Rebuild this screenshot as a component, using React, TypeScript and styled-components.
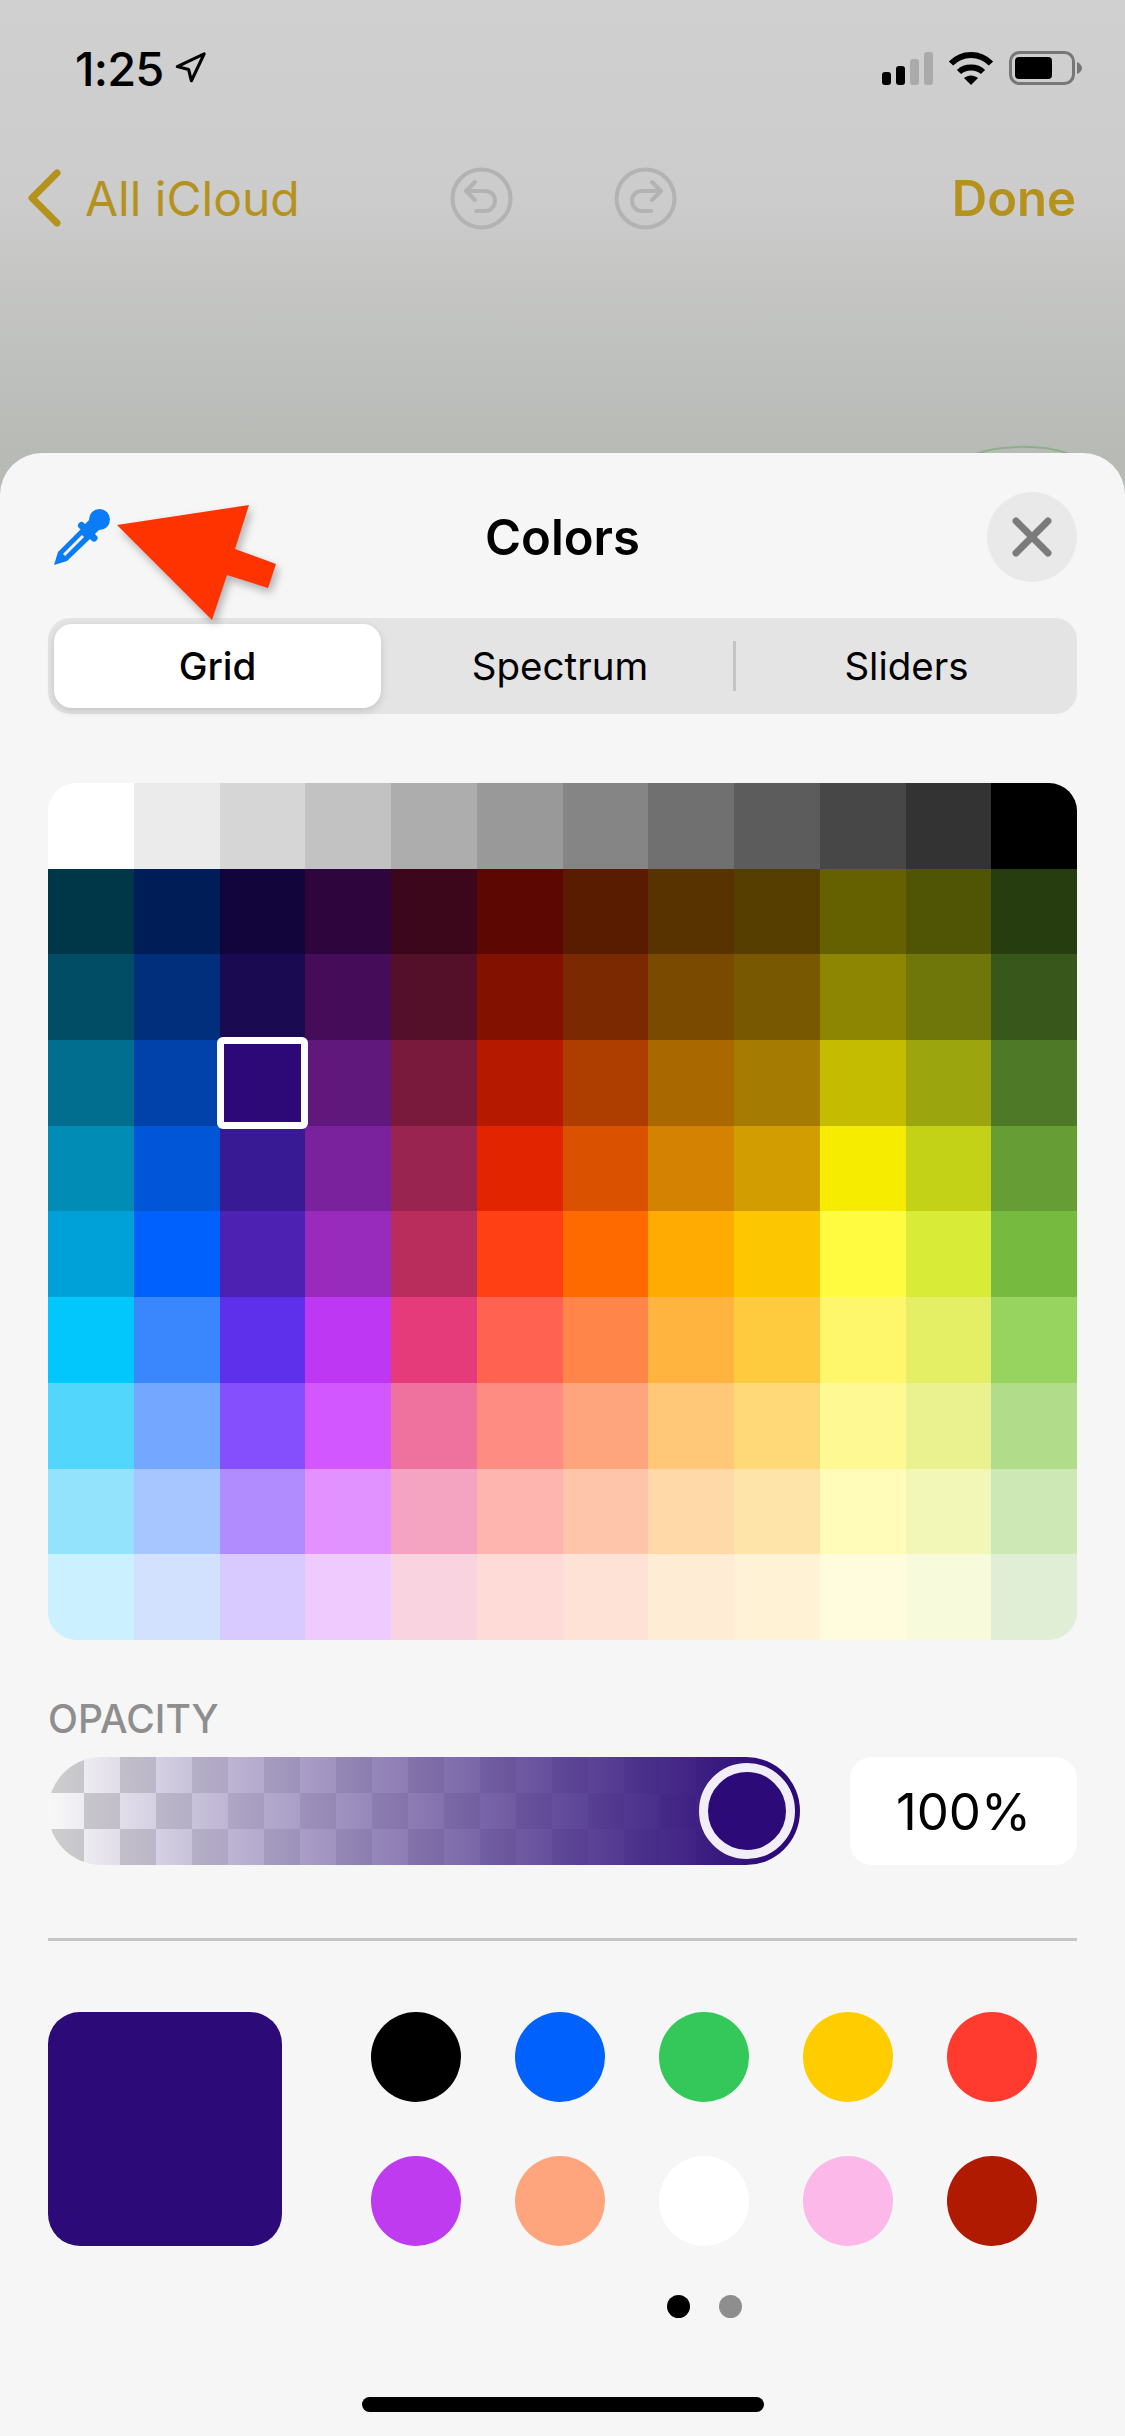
import styled, { createGlobalStyle } from 'styled-components';
import { Navigation, X } from 'lucide-react';

const GRID_COLORS = [
  ['#ffffff', '#ebebeb', '#d6d6d6', '#c2c2c2', '#adadad', '#999999', '#858585', '#707070', '#5c5c5c', '#474747', '#333333', '#000000'],
  ['#003748', '#011d57', '#11053b', '#2e063d', '#3c071b', '#5c0701', '#5a1c00', '#583300', '#563d00', '#666100', '#4f5504', '#263e0f'],
  ['#004d65', '#012f7b', '#1a0a52', '#450d59', '#551029', '#831100', '#7b2900', '#7a4a00', '#785800', '#8d8602', '#6f760a', '#38571a'],
  ['#016e8f', '#0042a9', '#2c0977', '#61187c', '#791a3d', '#b51a00', '#ad3e00', '#a96800', '#a67b01', '#c4bc00', '#9ba50e', '#4e7a27'],
  ['#008cb4', '#0056d6', '#371a94', '#7a219e', '#99244f', '#e22400', '#da5100', '#d38301', '#d19d01', '#f5ec00', '#c3d117', '#669d34'],
  ['#00a1d8', '#0061fd', '#4d22b2', '#982abc', '#b92d5d', '#ff4015', '#ff6a00', '#ffab01', '#fdc700', '#fefb41', '#d8ec37', '#76bb40'],
  ['#01c7fc', '#3a87fd', '#5e30eb', '#be38f3', '#e63b7a', '#ff6250', '#ff8648', '#feb43f', '#fecb3e', '#fff76b', '#e4ef65', '#96d35f'],
  ['#52d6fc', '#74a7ff', '#864ffd', '#d357fe', '#ee719e', '#ff8c82', '#ffa57d', '#ffc777', '#ffd977', '#fff994', '#eaf28f', '#b1dd8b'],
  ['#93e3fc', '#a7c6ff', '#b18cfe', '#e292fe', '#f4a4c0', '#ffb5af', '#ffc5ab', '#ffd9a8', '#fee4a8', '#fffbb9', '#f2f7b7', '#cde8b5'],
  ['#cbf0ff', '#d2e2fe', '#d8c9fe', '#efcaff', '#f9d3e0', '#ffdbd8', '#ffe2d6', '#ffecd4', '#fff2d5', '#fefcdd', '#f7fadb', '#dfeed4'],
];

const SAVED_COLORS = ['#000000', '#0061fd', '#34c759', '#ffcc00', '#ff3b30', '#bf3bf0', '#ffa57d', '#ffffff', '#fbb8e8', '#b01a00'];

const GlobalStyle = createGlobalStyle`
  html, body {
    margin: 0;
    padding: 0;
    background: #f6f6f6;
  }
  * {
    box-sizing: border-box;
  }
`;

const Phone = styled.div`
  position: relative;
  width: 1125px;
  height: 2436px;
  overflow: hidden;
  display: flex;
  flex-direction: column;
  font-family: Inter, "Liberation Sans", sans-serif;
  background: linear-gradient(180deg, #cfd0cf 0%, #cbcccb 200px, #b8bab6 453px);
`;

const StatusBar = styled.div`
  height: 136px;
  flex-shrink: 0;
  display: flex;
  align-items: center;
  justify-content: space-between;
  padding: 0 43px 0 75px;
`;

const TimeGroup = styled.div`
  display: flex;
  align-items: center;
  gap: 9px;
  color: #000;
`;

const Time = styled.span`
  font-size: 47px;
  font-weight: 500;
  letter-spacing: -0.8px;
  line-height: 1;
`;

const StatusIcons = styled.div`
  display: flex;
  align-items: center;
  gap: 15px;
`;

const NavBar = styled.div`
  height: 124px;
  flex-shrink: 0;
  display: flex;
  align-items: center;
  padding: 0 49px 0 27px;
`;

const BackLink = styled.div`
  width: 423px;
  display: flex;
  align-items: center;
  gap: 24px;
  color: #b5921d;
  font-size: 48px;
  font-weight: 400;
`;

const HistoryGroup = styled.div`
  display: flex;
  gap: 101px;
`;

const DoneLink = styled.div`
  margin-left: auto;
  color: #b5921d;
  font-size: 49px;
  font-weight: 600;
`;

const Scribble = styled.svg`
  position: absolute;
  left: 970px;
  top: 441px;
`;

const Sheet = styled.div`
  position: relative;
  margin-top: auto;
  height: 1983px;
  background: #f6f6f6;
  border-radius: 42px 42px 0 0;
  padding: 0 48px;
  display: flex;
  flex-direction: column;
`;

const Pointer = styled.svg`
  position: absolute;
  left: 117px;
  top: 52px;
  z-index: 2;
  overflow: visible;
  filter: drop-shadow(3px 5px 4px rgba(0, 0, 0, 0.28));
`;

const SheetHeader = styled.div`
  display: grid;
  grid-template-columns: 1fr auto 1fr;
  align-items: center;
  padding-top: 39px;
  margin-bottom: 36px;
`;

const PickerIcon = styled.svg`
  margin-left: 4px;
`;

const SheetTitle = styled.h1`
  margin: 0;
  font-size: 49px;
  font-weight: 600;
  color: #000;
`;

const CloseButton = styled.div`
  justify-self: end;
  width: 90px;
  height: 90px;
  border-radius: 50%;
  background: #e9e9e9;
  color: #7b7b7b;
  display: flex;
  align-items: center;
  justify-content: center;
`;

const SegmentedControl = styled.div`
  height: 96px;
  flex-shrink: 0;
  display: flex;
  align-items: center;
  padding-left: 6px;
  border-radius: 22px;
  background: #e4e4e4;
`;

const Segment = styled.div<{ $active?: boolean; $width?: number }>`
  height: 84px;
  display: flex;
  align-items: center;
  justify-content: center;
  font-size: 38.5px;
  font-weight: ${(p) => (p.$active ? 500 : 400)};
  color: #000;
  flex: ${(p) => (p.$width ? `0 0 ${p.$width}px` : '1')};
  padding-left: ${(p) => (p.$active || !p.$width ? 0 : 6)}px;
  background: ${(p) => (p.$active ? '#fff' : 'transparent')};
  border-radius: 18px;
  box-shadow: ${(p) => (p.$active ? '0 3px 8px rgba(0, 0, 0, 0.14)' : 'none')};
`;

const SegmentDivider = styled.div`
  flex: 0 0 3px;
  height: 50px;
  background: #c4c4c4;
`;

const ColorGrid = styled.div`
  margin-top: 69px;
  height: 857px;
  flex-shrink: 0;
  display: grid;
  grid-template-columns: repeat(12, 1fr);
  grid-template-rows: repeat(10, 1fr);
  border-radius: 28px;
  overflow: hidden;
`;

const ColorCell = styled.div<{ $color: string; $selected?: boolean }>`
  position: relative;
  z-index: ${(p) => (p.$selected ? 1 : 0)};
  background: ${(p) => p.$color};

  &::after {
    content: '';
    display: ${(p) => (p.$selected ? 'block' : 'none')};
    position: absolute;
    inset: -3px;
    border: 7px solid #fff;
    border-radius: 6px;
  }
`;

const OpacityLabel = styled.div`
  margin-top: 59px;
  height: 40px;
  line-height: 40px;
  font-size: 39px;
  font-weight: 500;
  color: #8e8e8e;
`;

const OpacityRow = styled.div`
  margin-top: 18px;
  display: flex;
  gap: 50px;
`;

const OpacitySlider = styled.div`
  position: relative;
  flex: 0 0 752px;
  height: 108px;
  border-radius: 54px;
  overflow: hidden;
  background:
    linear-gradient(90deg, rgba(44, 11, 120, 0) 0%, #2c0b78 96%),
    linear-gradient(90deg, rgba(228, 228, 234, 0) 4%, rgba(228, 228, 234, 0.55) 25%),
    repeating-conic-gradient(#f8f8f8 0 25%, #cfcfcf 0 50%) 0 0 / 72px 72px;
`;

const SliderThumb = styled.div`
  position: absolute;
  right: 5px;
  top: 6px;
  width: 96px;
  height: 96px;
  border-radius: 50%;
  background: #2c0b78;
  border: 9px solid #f2eef8;
`;

const PercentBox = styled.div`
  flex: 1;
  height: 108px;
  border-radius: 22px;
  background: #fff;
  display: flex;
  align-items: center;
  justify-content: center;
  font-size: 51px;
  color: #000;
`;

const Divider = styled.div`
  margin-top: 73px;
  height: 3px;
  flex-shrink: 0;
  background: #c6c6c6;
`;

const PaletteRow = styled.div`
  margin-top: 71px;
  display: flex;
  align-items: flex-start;
  gap: 89px;
`;

const CurrentSwatch = styled.div`
  width: 234px;
  height: 234px;
  border-radius: 32px;
  background: #2c0b78;
`;

const PaletteColumn = styled.div`
  display: flex;
  flex-direction: column;
  align-items: center;
  gap: 49px;
`;

const SavedGrid = styled.div`
  display: grid;
  grid-template-columns: repeat(5, 90px);
  grid-auto-rows: 90px;
  gap: 54px;
`;

const SavedColor = styled.div<{ $color: string }>`
  border-radius: 50%;
  background: ${(p) => p.$color};
`;

const Pager = styled.div`
  display: flex;
  gap: 29px;
`;

const PagerDot = styled.div<{ $active?: boolean }>`
  width: 23px;
  height: 23px;
  border-radius: 50%;
  background: ${(p) => (p.$active ? '#000' : '#8e8e8e')};
`;

const HomeBar = styled.div`
  width: 402px;
  height: 15px;
  margin: 79px auto 0;
  border-radius: 8px;
  background: #000;
`;

const SignalIcon = () => (
  <svg width="51" height="33" viewBox="0 0 51 33">
    <rect x="0" y="20" width="9" height="13" rx="3" fill="#000" />
    <rect x="14" y="14" width="9" height="19" rx="3" fill="#000" />
    <rect x="28" y="7" width="9" height="26" rx="3" fill="#a9aaa9" />
    <rect x="42" y="0" width="9" height="33" rx="3" fill="#a9aaa9" />
  </svg>
);

const WifiIcon = () => (
  <svg width="46" height="34" viewBox="0 0 46 34" fill="none" stroke="#000" strokeWidth="6">
    <path d="M3 12.5C14 1 32 1 43 12.5" />
    <path d="M11 21C17 15 29 15 35 21" />
    <path d="M16 27C20 23.5 26 23.5 30 27L23 34Z" fill="#000" stroke="none" />
  </svg>
);

const BatteryIcon = () => (
  <svg width="73" height="34" viewBox="0 0 73 34">
    <rect x="1.5" y="1.5" width="63" height="31" rx="9" fill="none" stroke="#777" strokeWidth="3" />
    <rect x="6" y="6" width="37" height="22" rx="4" fill="#000" />
    <path d="M68 11C71 12 73 15 73 17C73 19 71 22 68 23Z" fill="#777" />
  </svg>
);

const ChevronIcon = () => (
  <svg width="34" height="58" viewBox="0 0 34 58" fill="none" stroke="#b5921d" strokeWidth="7" strokeLinecap="round" strokeLinejoin="round">
    <path d="M30 4L5 29L30 54" />
  </svg>
);

const UndoIcon = ({ flip }: { flip?: boolean }) => (
  <svg width="63" height="63" viewBox="0 0 63 63" fill="none" stroke="#b2b3b2" strokeWidth="4" strokeLinecap="round" strokeLinejoin="round">
    <circle cx="31.5" cy="31.5" r="29" />
    <g transform={flip ? 'translate(63 0) scale(-1 1)' : undefined}>
      <path d="M25 33L16 24L25 15" />
      <path d="M16 24H35C41 24 45 28 45 33.5C45 39 41 44 35 44H26" />
    </g>
  </svg>
);

const EyedropperIcon = () => (
  <PickerIcon width="60" height="60" viewBox="0 0 60 60">
    <circle cx="47.5" cy="12.5" r="10.5" fill="#0a7cf5" />
    <path d="M35 25L45 15" stroke="#0a7cf5" strokeWidth="14" />
    <path d="M29.5 18.5L42 31" stroke="#0a7cf5" strokeWidth="7" strokeLinecap="round" />
    <path d="M30 21L39.5 30.5L15 54L2 58L6 45Z" fill="#0a7cf5" />
    <path d="M31 29L12 48" stroke="#f6f6f6" strokeWidth="3" />
  </PickerIcon>
);

const App = () => (
  <>
    <GlobalStyle />
    <Phone>
      <StatusBar>
        <TimeGroup>
          <Time>1:25</Time>
          <Navigation size={34} strokeWidth={2.2} color="#000" />
        </TimeGroup>
        <StatusIcons>
          <SignalIcon />
          <WifiIcon />
          <BatteryIcon />
        </StatusIcons>
      </StatusBar>
      <NavBar>
        <BackLink>
          <ChevronIcon />
          All iCloud
        </BackLink>
        <HistoryGroup>
          <UndoIcon />
          <UndoIcon flip />
        </HistoryGroup>
        <DoneLink>Done</DoneLink>
      </NavBar>
      <Scribble width="110" height="20" viewBox="0 0 110 20" fill="none" stroke="#8fae8a" strokeWidth="2">
        <path d="M6 13C25 5 70 2 99 13" />
      </Scribble>
      <Sheet>
        <Pointer width="160" height="116" viewBox="0 0 160 116">
          <polygon points="0,20 132,0 118,44 159,59 151,83 110,70 95,115" fill="#ff3300" />
        </Pointer>
        <SheetHeader>
          <EyedropperIcon />
          <SheetTitle>Colors</SheetTitle>
          <CloseButton>
            <X size={64} strokeWidth={2.6} />
          </CloseButton>
        </SheetHeader>
        <SegmentedControl>
          <Segment $active $width={327}>Grid</Segment>
          <Segment $width={352}>Spectrum</Segment>
          <SegmentDivider />
          <Segment>Sliders</Segment>
        </SegmentedControl>
        <ColorGrid>
          {GRID_COLORS.map((row, r) =>
            row.map((color, c) => (
              <ColorCell key={`${r}-${c}`} $color={color} $selected={r === 3 && c === 2} />
            )),
          )}
        </ColorGrid>
        <OpacityLabel>OPACITY</OpacityLabel>
        <OpacityRow>
          <OpacitySlider>
            <SliderThumb />
          </OpacitySlider>
          <PercentBox>100%</PercentBox>
        </OpacityRow>
        <Divider />
        <PaletteRow>
          <CurrentSwatch />
          <PaletteColumn>
            <SavedGrid>
              {SAVED_COLORS.map((color) => (
                <SavedColor key={color} $color={color} />
              ))}
            </SavedGrid>
            <Pager>
              <PagerDot $active />
              <PagerDot />
            </Pager>
          </PaletteColumn>
        </PaletteRow>
        <HomeBar />
      </Sheet>
    </Phone>
  </>
);

export default App;
